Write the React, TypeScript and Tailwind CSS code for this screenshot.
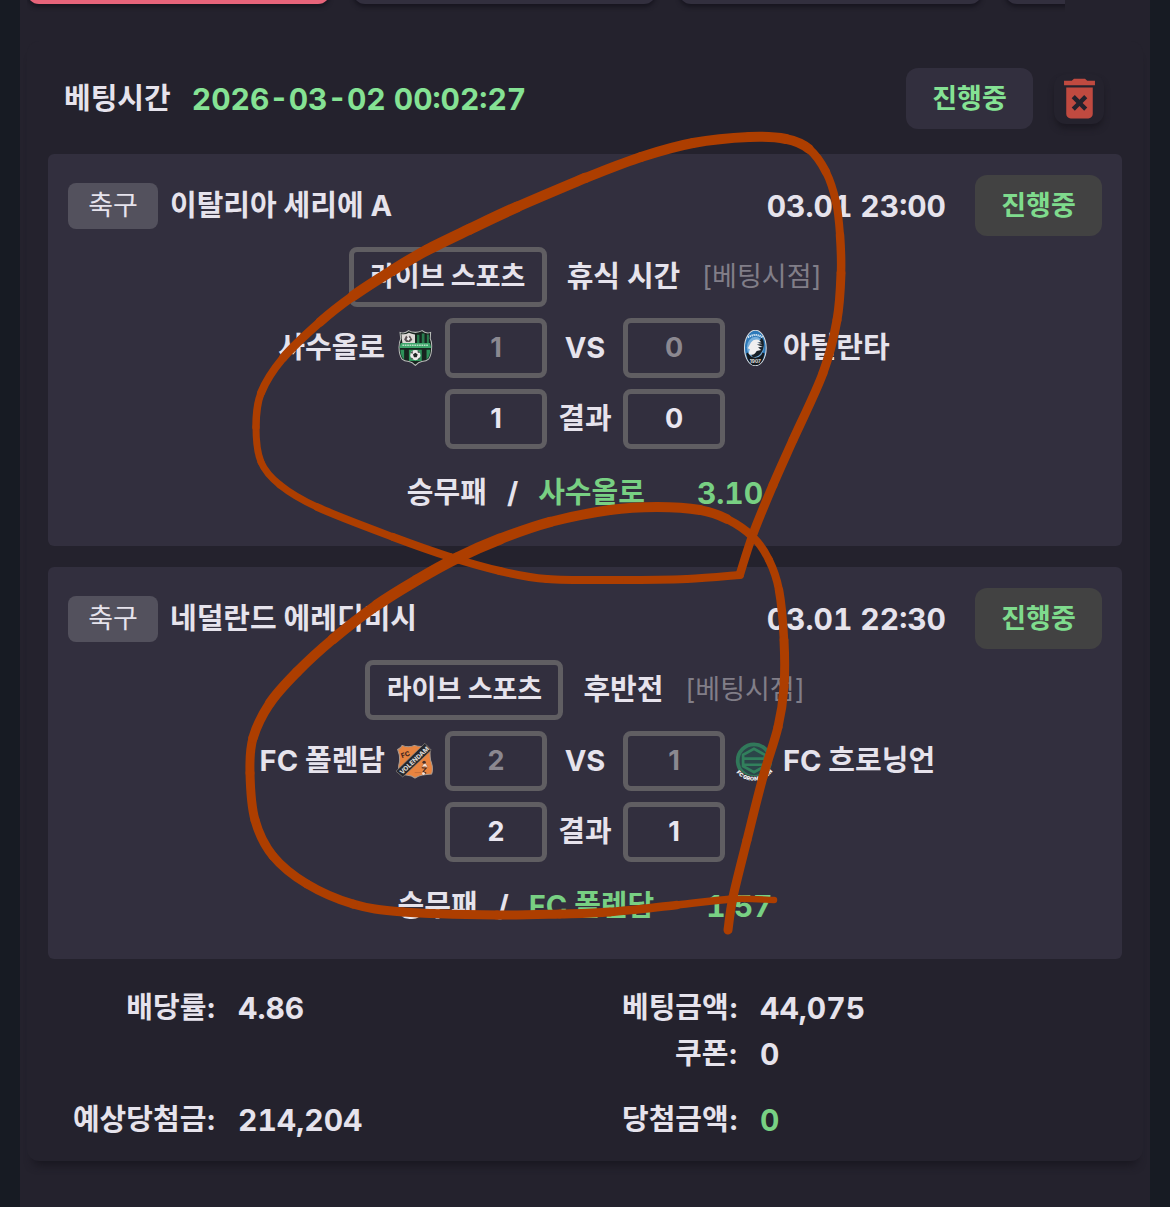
import type { ReactNode } from "react";
import { MdDeleteForever } from "react-icons/md";

type Team = { name: string; crest: ReactNode; live: number; result: number };

type Match = {
  id: string;
  sport: string;
  league: string;
  time: string;
  status: string;
  phase: string;
  home: Team;
  away: Team;
  market: string;
  pick: string;
  odds: string;
};

/* x, y, pen width */
type PenPoint = [number, number, number];

function SassuoloCrest() {
  return (
    <svg viewBox="37 32 106 106" className="size-9 shrink-0" aria-hidden="true">
      <path
        d="M46 39q14 5 25-5q8 5 20 5q11 0 20-5q11 10 25 5l-1 19q5 10 4 25q0 23-9 35q-6 6-20 7q-10 2-19 11q-9-9-19-11q-14-1-20-7q-9-12-9-35q0-15 5-25z"
        fill="#18241f"
        stroke="#b9bdb9"
        strokeWidth="3"
      />
      <path d="M50 44q12 2 22-4q8 4 18 5v25H53l-2-12z" fill="#ddd9d6" />
      <path d="M58 60l6-12 5 7 6-7 7 13-7 6H64z" fill="#5b5254" />
      <path d="M70 52l6 5-5 7-6-5z" fill="#eee" />
      <path d="M96 46h7v24h-7zM110 42h8v28h-8zM125 45h6v25h-6z" fill="#287b4d" />
      <path d="M48 70h86l4 15H44z" fill="#3fa66c" />
      <path d="M53 77h75" stroke="#b8dfc4" strokeWidth="4" strokeDasharray="5 2" />
      <path d="M47 90h11v29q-10-8-11-29zM124 90h11q-1 21-11 29zM72 90h38v33H72z" fill="#2c9158" />
      <circle cx="91" cy="106" r="15" fill="#ecebea" />
      <path d="M91 99l7 5-3 8h-8l-3-8zM78 99l6-5-2 9zM98 92l7 8-7-2zM80 113l6 6-7-2zM97 119l7-7-1 6z" fill="#202725" />
    </svg>
  );
}

function AtalantaCrest() {
  return (
    <svg viewBox="37 32 106 106" className="size-9 shrink-0" aria-hidden="true">
      <ellipse cx="91" cy="85" rx="32" ry="52" fill="#2d79b9" stroke="#d7dde2" strokeWidth="3" />
      <path d="M64 101q27-17 54 0q-6 35-27 35T64 101z" fill="#151a1f" />
      <ellipse cx="91" cy="83" rx="25" ry="31" fill="#76aedb" />
      <path d="M84 112q-6-3-4-12l30-46q7 9 6 24q-2 20-16 30q-8 5-16 4z" fill="#182128" />
      <path
        d="M71 101l4-12-6-3 9-17q8-12 22-8l9 7-14 1 17 5-17 1 18 7-14 1 9 8-13 3q-7 14-19 10z"
        fill="#f0eff0"
      />
      <path d="M69 54q22-15 44 0" fill="none" stroke="#d5e7f4" strokeWidth="6" strokeDasharray="4 2" />
      <text x="91" y="128" textAnchor="middle" fontSize="14" fontWeight="700" fill="#e8e8e8" className="font-['Inter',sans-serif]">
        1907
      </text>
    </svg>
  );
}

function VolendamCrest() {
  return (
    <svg viewBox="39 34 106 106" className="size-9 shrink-0 overflow-visible" aria-hidden="true">
      <path
        d="M41 53q10-4 13-12q19 8 36 0q19 6 36 1q2 10 11 12q-2 14 1 31q9 23 3 40q-15 1-27 3q-11 2-22 9q-10-8-22-8q-14-2-24-5q-5-15 0-33q3-18-5-38z"
        fill="#e88440"
        stroke="#a99b91"
        strokeWidth="3"
      />
      <path d="M36 117L121 35l19 20-84 79z" fill="#25262b" stroke="#8d8781" strokeWidth="2" />
      <text
        x="90"
        y="92"
        textAnchor="middle"
        fontSize="19"
        fontWeight="800"
        fill="#d9d6d4"
        transform="rotate(-43 90 85)"
        className="font-['Inter',sans-serif]"
      >
        VOLENDAM
      </text>
      <text
        x="54"
        y="79"
        fontSize="20"
        fontWeight="800"
        fill="#442620"
        transform="rotate(-20 54 79)"
        className="font-['Inter',sans-serif]"
      >
        FC
      </text>
      <circle cx="119" cy="91" r="5" fill="#493029" />
      <path d="M112 105l6-10h6l6 11-9-3zM91 121h19" fill="#f5e8df" stroke="#8b4c2c" strokeWidth="1" />
      <path d="M112 107l13 1-9 10 9 5" fill="none" stroke="#3b2825" strokeWidth="3" />
      <circle cx="117" cy="124" r="4" fill="#efe4df" />
    </svg>
  );
}

function GroningenCrest() {
  return (
    <svg viewBox="37 34 106 106" className="size-9 shrink-0 overflow-visible" aria-hidden="true">
      <circle cx="87" cy="86" r="48" fill="#2b4549" stroke="#31785a" strokeWidth="11" />
      <path d="M119 82V69L87 51 55 69v33l32 18 32-18v-4H58M58 80h61" fill="none" stroke="#31805c" strokeWidth="8" />
      <defs>
        <path id="groningen-ring" d="M35 121q19 24 52 24t52-24" />
      </defs>
      <path d="M39 118q17 22 48 22t48-22" fill="none" stroke="#322f3e" strokeWidth="16" />
      <text fontSize="16" fontWeight="900" fill="#f2f2f2" className="font-['Inter',sans-serif]">
        <textPath href="#groningen-ring">FC GRONINGEN</textPath>
      </text>
    </svg>
  );
}

const MATCHES: Match[] = [
  {
    id: "serie-a",
    sport: "축구",
    league: "이탈리아 세리에 A",
    time: "03.01 23:00",
    status: "진행중",
    phase: "휴식 시간",
    home: { name: "사수올로", crest: <SassuoloCrest />, live: 1, result: 1 },
    away: { name: "아틸란타", crest: <AtalantaCrest />, live: 0, result: 0 },
    market: "승무패",
    pick: "사수올로",
    odds: "3.10",
  },
  {
    id: "eredivisie",
    sport: "축구",
    league: "네덜란드 에레디비시",
    time: "03.01 22:30",
    status: "진행중",
    phase: "후반전",
    home: { name: "FC 폴렌담", crest: <VolendamCrest />, live: 2, result: 2 },
    away: { name: "FC 흐로닝언", crest: <GroningenCrest />, live: 1, result: 1 },
    market: "승무패",
    pick: "FC 폴렌담",
    odds: "1.57",
  },
];

const UPPER_RIGHT: PenPoint[] = [
  [585, 178, 10], [641, 157, 10], [693, 143, 10], [749, 137, 10], [786, 139, 10],
  [809, 149, 9], [826, 172, 8], [836, 202, 8], [840, 235, 8], [841, 273, 9],
  [837, 320, 9], [823, 373, 9], [793, 440, 9], [773, 485, 9], [753, 534, 9],
  [740, 574, 8],
];

const UPPER_LEFT: PenPoint[] = [
  [740, 575, 8], [687, 579, 8], [620, 580, 8], [547, 579, 8], [500, 571, 8],
  [450, 557, 8], [393, 537, 8], [317, 507, 7], [280, 485, 7], [261, 462, 7],
  [256, 427, 7], [261, 393, 8], [283, 358, 8], [320, 322, 9], [353, 296, 10],
  [393, 270, 11], [427, 250, 11], [470, 229, 11], [517, 207, 11], [585, 178, 10],
];

const LOWER_LOOP: PenPoint[] = [
  [774, 900, 6], [733, 899, 7], [677, 905, 8], [610, 912, 9], [560, 914, 9],
  [497, 915, 9], [403, 912, 9], [353, 904, 9], [307, 884, 9], [273, 856, 9],
  [255, 820, 9], [250, 773, 9], [253, 738, 9], [270, 703, 10], [297, 672, 10],
  [333, 639, 10], [377, 605, 11], [417, 580, 11], [457, 558, 11], [500, 539, 11],
  [550, 522, 10], [610, 510, 10], [657, 507, 10], [700, 510, 10], [727, 519, 9],
  [753, 537, 8], [769, 560, 8], [779, 590, 8], [784, 640, 9], [784, 687, 9],
  [778, 727, 9], [763, 777, 9], [747, 840, 9], [733, 897, 9], [728, 930, 9],
];

// smooth curve through the points, one short cubic for each pair
function PenStroke({ points }: { points: PenPoint[] }) {
  return (
    <g fill="none" stroke="#ad3e00" strokeLinecap="round">
      {points.slice(0, -1).map((p, i) => {
        const q = points[i + 1];
        const before = points[i - 1] ?? p;
        const after = points[i + 2] ?? q;
        const d = [
          `M${p[0]} ${p[1]}`,
          `C${p[0] + (q[0] - before[0]) / 6} ${p[1] + (q[1] - before[1]) / 6}`,
          `${q[0] - (after[0] - p[0]) / 6} ${q[1] - (after[1] - p[1]) / 6}`,
          `${q[0]} ${q[1]}`,
        ].join(" ");
        return <path key={i} d={d} strokeWidth={(p[2] + q[2]) / 2} />;
      })}
    </g>
  );
}

function ScoreBox({ value, dim }: { value: number; dim?: boolean }) {
  return (
    <div
      className={`flex h-[60px] items-center justify-center rounded-lg border-[5px] border-[#605e62] text-[27px] ${
        dim ? "text-[#8b8890]" : "text-[#e9e6f0]"
      }`}
    >
      {value}
    </div>
  );
}

function MatchCard({ match }: { match: Match }) {
  const { home, away } = match;
  return (
    <article className="flex flex-col gap-[11px] rounded-md bg-[#322f3e] px-5 pt-[21px] pb-5">
      <div className="flex items-center">
        <span className="flex h-[46px] w-[90px] items-center justify-center rounded-lg bg-[#53515d] text-[27px] font-normal">
          {match.sport}
        </span>
        <h2 className="ml-3">{match.league}</h2>
        <time className="mr-[29px] ml-auto text-[30px] tabular-nums">{match.time}</time>
        <span className="flex h-[61px] w-[127px] items-center justify-center rounded-xl bg-[#424242] text-[27px] text-[#7fdb8d]">
          {match.status}
        </span>
      </div>

      <div className="flex h-[60px] items-center justify-center">
        <span className="flex h-[60px] w-[198px] items-center justify-center rounded-lg border-[5px] border-[#605e62] text-[27px]">
          라이브 스포츠
        </span>
        <span className="ml-5">{match.phase}</span>
        <span className="ml-[22px] text-[27px] font-normal text-[#817e88]">[베팅시점]</span>
      </div>

      <div className="grid grid-cols-[1fr_102px_76px_102px_1fr] items-center">
        <div className="flex items-center justify-end gap-3 pr-3">
          <span>{home.name}</span>
          {home.crest}
        </div>
        <ScoreBox value={home.live} dim />
        <span className="text-center">VS</span>
        <ScoreBox value={away.live} dim />
        <div className="flex items-center gap-2.5 pl-3">
          {away.crest}
          <span>{away.name}</span>
        </div>
      </div>

      <div className="grid grid-cols-[102px_76px_102px] items-center justify-center">
        <ScoreBox value={home.result} />
        <span className="text-center">결과</span>
        <ScoreBox value={away.result} />
      </div>

      <div className="flex h-[66px] items-center justify-center">
        <span>{match.market}</span>
        <span className="mx-5">/</span>
        <span className="text-[#78d083]">{match.pick}</span>
        <span className="ml-[52px] text-[30px] text-[#78d083] tabular-nums">{match.odds}</span>
      </div>
    </article>
  );
}

export default function App() {
  return (
    <div className="relative min-h-screen bg-[#171b23] px-5 font-['Inter','Noto_Sans_CJK_KR',sans-serif] text-[29px] leading-[46px] font-bold whitespace-nowrap text-[#e6e3ec]">
      <main className="min-h-screen bg-[#24222d] px-[7px] pb-11">
        {/* Category tabs, scrolled almost out of view */}
        <nav className="mr-[78px] flex h-3.5 items-end gap-[23px] overflow-hidden pb-2.5">
          <button type="button" aria-label="1" className="h-14 w-[303px] shrink-0 rounded-xl bg-[#e7647a] shadow-[0_3px_4px_#17151f]" />
          <button type="button" aria-label="2" className="h-14 w-[303px] shrink-0 rounded-xl bg-[#322f3e] shadow-[0_3px_4px_#17151f]" />
          <button type="button" aria-label="3" className="h-14 w-[303px] shrink-0 rounded-xl bg-[#322f3e] shadow-[0_3px_4px_#17151f]" />
          <button type="button" aria-label="4" className="h-14 w-[303px] shrink-0 rounded-xl bg-[#322f3e] shadow-[0_3px_4px_#17151f]" />
        </nav>

        <section className="mt-[27px] rounded-xl bg-[#24222d] px-[21px] pt-[27px] pb-[18px] shadow-[0_10px_8px_-6px_#191720]">
          <header className="flex items-center pr-[18px] pl-4">
            <span>베팅시간</span>
            <time className="ml-[21px] text-[30px] text-[#85e294] tabular-nums">2026-03-02 00:02:27</time>
            <span className="ml-auto flex h-[61px] w-[127px] items-center justify-center rounded-xl bg-[#322f3e] text-[27px] text-[#85e294]">
              진행중
            </span>
            <button
              type="button"
              aria-label="삭제"
              className="ml-[21px] flex size-[50px] items-center justify-center rounded-xl bg-[#24222d] text-[#c04a40] shadow-[0_5px_6px_-1px_#1a1821]"
            >
              <MdDeleteForever className="size-[53px] shrink-0" />
            </button>
          </header>

          <div className="mt-[25px] flex flex-col gap-[21px]">
            {MATCHES.map((match) => (
              <MatchCard key={match.id} match={match} />
            ))}
          </div>

          {/* Totals */}
          <dl className="mt-[26px] grid grid-cols-[168px_1fr_116px_1fr] gap-x-[22px]">
            <dt className="text-right">배당률:</dt>
            <dd className="text-[30px] tabular-nums">4.86</dd>
            <dt className="text-right">베팅금액:</dt>
            <dd className="text-[30px] tabular-nums">44,075</dd>
            <dt className="col-start-3 text-right">쿠폰:</dt>
            <dd className="text-[30px] tabular-nums">0</dd>
            <dt className="mt-5 text-right">예상당첨금:</dt>
            <dd className="mt-5 text-[30px] tabular-nums">214,204</dd>
            <dt className="mt-5 text-right">당첨금액:</dt>
            <dd className="mt-5 text-[30px] text-[#78d083] tabular-nums">0</dd>
          </dl>
        </section>
      </main>

      {/* Freehand pen marks over the slip */}
      <svg viewBox="0 0 1170 1207" className="pointer-events-none absolute top-0 left-0 w-full" aria-hidden="true">
        <PenStroke points={UPPER_RIGHT} />
        <PenStroke points={UPPER_LEFT} />
        <PenStroke points={LOWER_LOOP} />
      </svg>
    </div>
  );
}
